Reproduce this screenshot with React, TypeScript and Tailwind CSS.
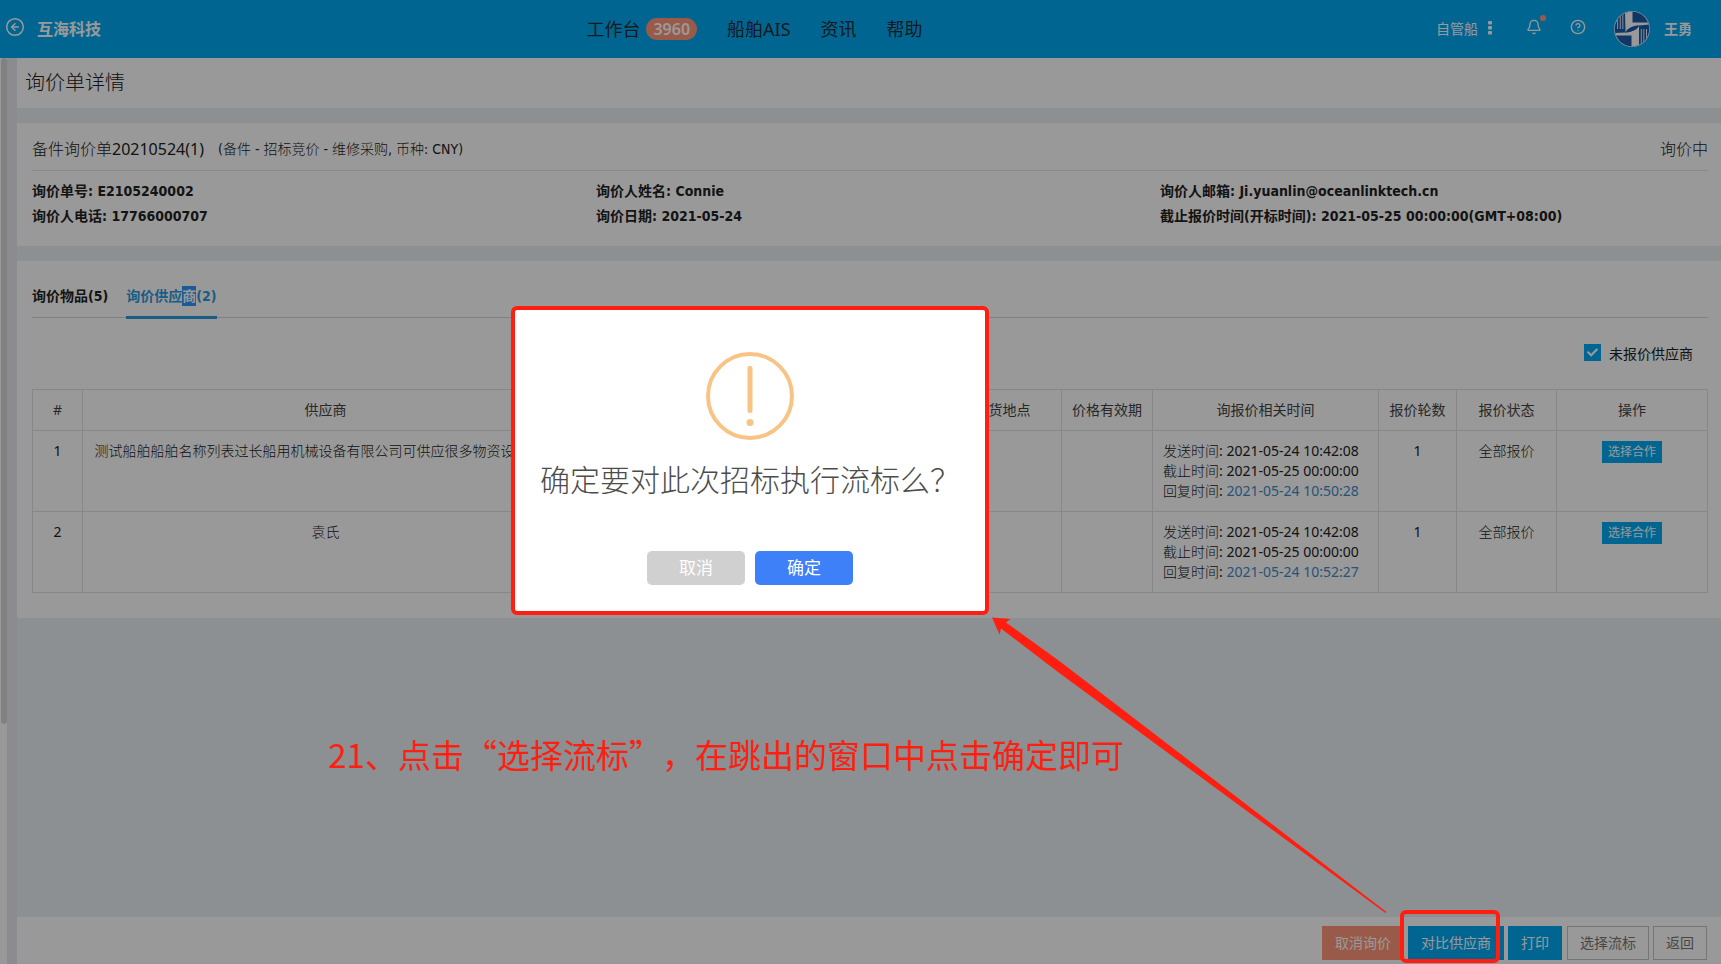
import { useState } from 'react';
import { CircleArrowLeft, Bell, CircleQuestionMark } from 'lucide-react';
import { FaCheck } from 'react-icons/fa';

const INFO = [
  { label: '询价单号', value: 'E2105240002' },
  { label: '询价人姓名', value: 'Connie' },
  { label: '询价人邮箱', value: 'Ji.yuanlin@oceanlinktech.cn' },
  { label: '询价人电话', value: '17766000707' },
  { label: '询价日期', value: '2021-05-24' },
  { label: '截止报价时间(开标时间)', value: '2021-05-25 00:00:00(GMT+08:00)' },
];

const SUPPLIERS = [
  {
    name: '测试船舶船舶名称列表过长船用机械设备有限公司可供应很多物资设备物资',
    sent: '2021-05-24 10:42:08',
    deadline: '2021-05-25 00:00:00',
    replied: '2021-05-24 10:50:28',
    rounds: 1,
    status: '全部报价',
  },
  {
    name: '袁氏',
    sent: '2021-05-24 10:42:08',
    deadline: '2021-05-25 00:00:00',
    replied: '2021-05-24 10:52:27',
    rounds: 1,
    status: '全部报价',
  },
];

function Logo() {
  return (
    <svg viewBox="0 0 36 36" className="h-9 w-9">
      <defs>
        <clipPath id="logo-clip">
          <circle cx="18" cy="18" r="17.2" />
        </clipPath>
      </defs>
      <circle cx="18" cy="18" r="18" fill="#dfe6f0" />
      <g clipPath="url(#logo-clip)">
        <rect width="36" height="36" fill="#1a5aa8" />
        {/* 左侧竖纹 */}
        <path d="M3.200 7h.9v11h-.9zM5.800 4h.9v14h-.9zM8.400 2h.9v16h-.9z" fill="#fff" />
        {/* 右侧竖纹 */}
        <path d="M26.800 18h.9v16h-.9zM29.400 18h.9v14h-.9zM32 18h.9v11h-.9z" fill="#fff" />
        {/* 中间互扣的两笔 */}
        <path d="M11 1L18.500 0V11.500H36V13.500L25 14.500C18 15 14 17.500 11.500 21.500z" fill="#fff" />
        <path d="M25 15V35L17.500 36V24.500H0V22L11 21.500C18 21 22.500 19 25 15z" fill="#fff" />
        <path d="M11.500 21.500C13.500 17.500 17.500 15 24.500 14.500 22.500 18.500 18.500 21 11.500 21.500z" fill="#1a5aa8" />
      </g>
    </svg>
  );
}

function Header() {
  return (
    <header className="flex h-[58px] items-center justify-between bg-[#03a9f4] pr-[29px] pl-[5px] shadow-sm">
      <div className="flex items-center gap-3 text-white">
        <button aria-label="返回" className="-mt-1">
          <CircleArrowLeft className="h-5 w-5" strokeWidth={1.8} />
        </button>
        <span className="text-base font-bold">互海科技</span>
      </div>

      <nav className="mr-7 flex items-center gap-[30px] text-lg text-[#222d32]">
        <a href="#" className="flex items-center gap-1.5">
          工作台
          <span className="rounded-full bg-[#ff967a] px-[7px] text-base leading-[22px] font-semibold text-white">3960</span>
        </a>
        <a href="#">船舶AIS</a>
        <a href="#">资讯</a>
        <a href="#">帮助</a>
      </nav>

      <div className="flex items-center text-sm text-white">
        <button className="flex items-center gap-2.5">
          自管船
          <svg viewBox="0 0 4 14" className="-mt-0.5 h-3.5 w-1" fill="currentColor">
            <rect width="4" height="3.500" rx="1" />
            <rect y="5" width="4" height="3.500" rx="1" />
            <rect y="10" width="4" height="3.500" rx="1" />
          </svg>
        </button>
        <button aria-label="通知" className="relative -mt-1 ml-[34px]">
          <Bell className="h-4 w-4" strokeWidth={2} />
          <span className="absolute -top-1 -right-1 h-1.5 w-1.5 rounded-full bg-[#ff967a]" />
        </button>
        <button aria-label="帮助" className="-mt-1 ml-7">
          <CircleQuestionMark className="h-4 w-4" strokeWidth={2} />
        </button>
        <a href="#" className="ml-7 flex items-center gap-3.5 font-bold">
          <Logo />
          王勇
        </a>
      </div>
    </header>
  );
}

function SupplierTable() {
  return (
    <table className="w-full table-fixed border-collapse text-center leading-5 [&_td]:border [&_td]:border-[#e2e2e2] [&_td]:p-2.5 [&_td]:align-top [&_th]:border [&_th]:border-[#e2e2e2] [&_th]:py-2.5 [&_th]:font-normal [&_th]:text-[#444]">
      <colgroup>
        <col className="w-[50px]" />
        <col className="w-[486px]" />
        <col />
        <col className="w-[118px]" />
        <col className="w-[91px]" />
        <col className="w-[226px]" />
        <col className="w-[78px]" />
        <col className="w-[100px]" />
        <col className="w-[151px]" />
      </colgroup>
      <thead>
        <tr>
          <th>#</th>
          <th>供应商</th>
          <th />
          <th>交货地点</th>
          <th>价格有效期</th>
          <th>询报价相关时间</th>
          <th>报价轮数</th>
          <th>报价状态</th>
          <th>操作</th>
        </tr>
      </thead>
      <tbody>
        {SUPPLIERS.map((s, i) => (
          <tr key={s.name}>
            <td>{i + 1}</td>
            <td className="font-light">{s.name}</td>
            <td />
            <td />
            <td />
            <td className="text-left whitespace-nowrap">
              <p><span className="font-light">发送时间</span>: {s.sent}</p>
              <p><span className="font-light">截止时间</span>: {s.deadline}</p>
              <p><span className="font-light">回复时间</span>: <span className="text-[#428bca]">{s.replied}</span></p>
            </td>
            <td>{s.rounds}</td>
            <td className="font-light">{s.status}</td>
            <td>
              <button className="bg-[#03a9f4] px-1.5 text-xs leading-[22px] text-white">选择合作</button>
            </td>
          </tr>
        ))}
      </tbody>
    </table>
  );
}

function ConfirmDialog() {
  return (
    <div className="fixed inset-0 z-20 flex items-center justify-center pr-[221px] pb-11">
      <div role="alertdialog" aria-labelledby="confirm-title" className="flex flex-col items-center rounded-md border-4 border-[#ff1e0f] bg-white px-[25px] pt-[42px] pb-[26px]">
        <svg viewBox="0 0 88 88" className="h-[88px] w-[88px]">
          <circle cx="44" cy="44" r="42" fill="none" stroke="#f8c486" strokeWidth="4" />
          <rect x="41.500" y="14" width="5" height="47" rx="2" fill="#f8c486" />
          <circle cx="44" cy="70.500" r="3.500" fill="#f8c486" />
        </svg>
        <h2 id="confirm-title" className="mt-5 text-3xl leading-10 font-light text-[#4c4c4c]">确定要对此次招标执行流标么？</h2>
        <div className="mt-[51px] flex gap-2.5 text-[17px] leading-[34px] text-white">
          <button className="w-[98px] rounded-[5px] bg-[#d0d0d0]">取消</button>
          <button className="w-[98px] rounded-[5px] bg-[#3d80f7]">确定</button>
        </div>
      </div>
    </div>
  );
}

export default function App() {
  const [showUnquoted, setShowUnquoted] = useState(true);

  return (
    <div lang="zh-CN" className="flex min-h-screen flex-col bg-[#eaf0f3] font-['Noto_Sans','Noto_Sans_CJK_SC',sans-serif] text-sm text-[#222]">
      <Header />

      <div className="flex flex-1">
        {/* 侧边滚动条 */}
        <div className="w-[7px] bg-white pl-px">
          <div className="h-[666px] rounded-full bg-[#d8d8d8]" />
        </div>
        <div className="w-2.5 bg-linear-to-r from-[#e8e8ee] to-[#e6ebf0]" />

        <main className="flex min-w-0 flex-1 flex-col">
          <h1 className="bg-white px-2 py-2.5 text-xl leading-[30px] font-light">询价单详情</h1>

          <section className="mt-[15px] bg-white pt-3.5 pr-[13px] pb-[17px] pl-[15px]">
            <div className="flex items-center border-b border-[#e2e5e9] pb-[9px] leading-6">
              <h2 className="text-base"><span className="font-light">备件询价单</span>20210524(1)</h2>
              <p className="ml-3.5 font-['DejaVu_Sans_Condensed','Noto_Sans_CJK_SC',sans-serif] font-light">
                (备件 - 招标竞价 - 维修采购, 币种: CNY)
              </p>
              <span className="ml-auto text-base font-light">询价中</span>
            </div>
            <div className="-mr-4 grid grid-cols-3 pt-2 font-['DejaVu_Sans_Condensed','Noto_Sans_CJK_SC',sans-serif] leading-[25px] font-bold">
              {INFO.map((item) => (
                <p key={item.label}>{item.label}: {item.value}</p>
              ))}
            </div>
          </section>

          <section className="mt-[15px] bg-white pt-[25px] pr-[13px] pb-[25px] pl-[15px]">
            <div className="flex gap-[18px] border-b border-[#d5d8dc] font-['DejaVu_Sans_Condensed','Noto_Sans_CJK_SC',sans-serif] leading-5 font-bold">
              <a href="#" className="-mb-0.5 border-b-3 border-transparent pb-2.5">询价物品(5)</a>
              <a href="#" className="-mb-0.5 border-b-3 border-[#2e9ae0] pb-2.5 text-[#2e9ae0]">
                询价供应<span className="bg-[#3297fd] py-0.5 text-white">商</span>(2)
              </a>
            </div>

            <div className="flex justify-end pt-[26px] pr-[15px] pb-[25px]">
              <label className="flex items-center gap-2 leading-5">
                <span className="relative -mt-1 h-[17px] w-[17px]">
                  <input
                    type="checkbox"
                    checked={showUnquoted}
                    onChange={(e) => setShowUnquoted(e.target.checked)}
                    className="block h-[17px] w-[17px] appearance-none border border-[#03a9f4] checked:bg-[#03a9f4]"
                  />
                  {showUnquoted && <FaCheck className="pointer-events-none absolute top-[3px] left-[3px] h-[11px] w-[11px] text-white" />}
                </span>
                未报价供应商
              </label>
            </div>

            <SupplierTable />
          </section>

          {/* 底部操作栏 */}
          <footer className="mt-auto flex justify-end gap-1 bg-white pt-[9px] pr-3.5 pb-1 leading-8">
            <button className="border border-[#ff967a] bg-[#ff967a] px-3 text-white">取消询价</button>
            <div className="relative">
              <button className="border border-[#03a9f4] bg-[#03a9f4] px-3 text-white">对比供应商</button>
              <div className="pointer-events-none absolute -top-4 -left-2 z-20 h-[53px] w-[100px] rounded-md border-4 border-[#ff1e0f]" />
            </div>
            <button className="mr-px border border-[#03a9f4] bg-[#03a9f4] px-3 text-white">打印</button>
            <button className="border border-[#c4c4c4] px-3 text-[#777]">选择流标</button>
            <button className="border border-[#c4c4c4] px-3 text-[#777]">返回</button>
          </footer>
        </main>
      </div>

      {/* 遮罩 */}
      <div className="fixed inset-0 z-10 bg-black/40" />

      <ConfirmDialog />

      {/* 操作说明标注 */}
      <svg viewBox="0 0 396 298" className="pointer-events-none absolute top-[616px] left-[991px] z-20 h-[298px] w-[396px]">
        <path d="M1 1.500L19.500 3 15 6.500 69 45.500 395.500 296 394.500 297 69 57.500 10 12.500 8.500 18.500z" fill="#ff1e0f" />
      </svg>
      <p className="absolute top-[730px] left-[328px] z-20 font-['Noto_Sans_CJK_SC',sans-serif] text-[33px] leading-[48px] whitespace-nowrap text-[#ff1e0f] [text-spacing-trim:space-all]">
        21、点击“选择流标”，在跳出的窗口中点击确定即可
      </p>
    </div>
  );
}
